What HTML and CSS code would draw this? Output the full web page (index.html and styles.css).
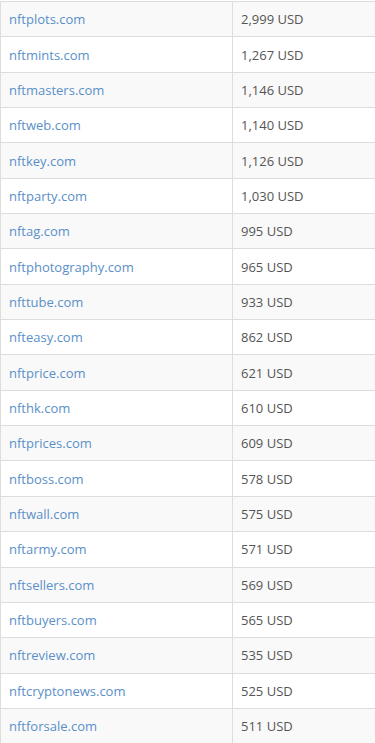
FILE: index.html
```html
<!DOCTYPE html>
<html>
<head>
<meta charset="utf-8">
<link rel="stylesheet" href="styles.css">
</head>
<body>
<table class="domains">
<tbody>
<tr><td><a href="#">nftplots.com</a></td><td>2,999 USD</td></tr>
<tr><td><a href="#">nftmints.com</a></td><td>1,267 USD</td></tr>
<tr><td><a href="#">nftmasters.com</a></td><td>1,146 USD</td></tr>
<tr><td><a href="#">nftweb.com</a></td><td>1,140 USD</td></tr>
<tr><td><a href="#">nftkey.com</a></td><td>1,126 USD</td></tr>
<tr><td><a href="#">nftparty.com</a></td><td>1,030 USD</td></tr>
<tr><td><a href="#">nftag.com</a></td><td>995 USD</td></tr>
<tr><td><a href="#">nftphotography.com</a></td><td>965 USD</td></tr>
<tr><td><a href="#">nfttube.com</a></td><td>933 USD</td></tr>
<tr><td><a href="#">nfteasy.com</a></td><td>862 USD</td></tr>
<tr><td><a href="#">nftprice.com</a></td><td>621 USD</td></tr>
<tr><td><a href="#">nfthk.com</a></td><td>610 USD</td></tr>
<tr><td><a href="#">nftprices.com</a></td><td>609 USD</td></tr>
<tr><td><a href="#">nftboss.com</a></td><td>578 USD</td></tr>
<tr><td><a href="#">nftwall.com</a></td><td>575 USD</td></tr>
<tr><td><a href="#">nftarmy.com</a></td><td>571 USD</td></tr>
<tr><td><a href="#">nftsellers.com</a></td><td>569 USD</td></tr>
<tr><td><a href="#">nftbuyers.com</a></td><td>565 USD</td></tr>
<tr><td><a href="#">nftreview.com</a></td><td>535 USD</td></tr>
<tr><td><a href="#">nftcryptonews.com</a></td><td>525 USD</td></tr>
<tr><td><a href="#">nftforsale.com</a></td><td>511 USD</td></tr>
</tbody>
</table>
</body>
</html>
```
FILE: styles.css
```css
html, body {
  margin: 0;
  padding: 0;
  background: #fff;
}
body {
  font-family: "Open Sans", "DejaVu Sans", sans-serif;
  font-size: 13px;
  color: #555;
  overflow: hidden;
}
.domains {
  width: 376px;
  border-collapse: collapse;
  margin-top: 1px;
}
.domains td {
  border: 1px solid #ddd;
  padding: 0 8px;
  height: 34.35px;
  line-height: 20px;
  vertical-align: middle;
  box-sizing: content-box;
}
.domains td:first-child {
  width: 215px;
}
.domains tr:nth-child(odd) td {
  background: #f9f9f9;
}
.domains a {
  color: #5a90c8;
  text-decoration: none;
}
```
